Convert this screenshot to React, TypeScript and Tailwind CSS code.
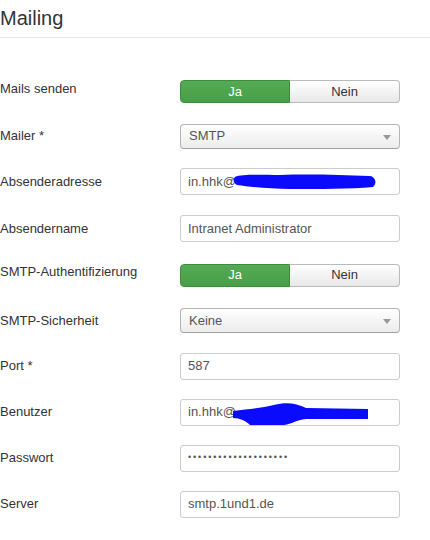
import React from "react";

const YesNo = () => {
  return (
    <div className="flex w-[220px] h-[23px] text-[13px]">
      <button className="w-1/2 rounded-l-[4px] border border-[#3d8b3d] bg-gradient-to-b from-[#55aa55] to-[#479f47] text-white">
        Ja
      </button>
      <button className="w-1/2 rounded-r-[4px] border border-l-0 border-[#bbbbbb] bg-gradient-to-b from-white to-[#e8e8e8] text-[#333]">
        Nein
      </button>
    </div>
  );
};

const Select = ({ value }: { value: string }) => {
  return (
    <div className="relative flex items-center w-[220px] h-[25px] pl-[8px] rounded-[4px] border border-[#b5b5b5] border-b-[#a0a0a0] bg-gradient-to-b from-white to-[#ececec] text-[13px] text-[#555]">
      {value}
      <svg
        className="absolute right-[8px] top-[10px]"
        width="8"
        height="5"
        viewBox="0 0 8 5"
      >
        <path d="M0 0 L8 0 L4 5 Z" fill="#999" />
      </svg>
    </div>
  );
};

const Input = ({
  value,
  children,
}: {
  value: string;
  children?: React.ReactNode;
}) => {
  return (
    <div className="relative flex items-center w-[220px] h-[27px] pl-[7px] rounded-[3px] border border-[#cccccc] bg-white text-[13px] text-[#555]">
      {value}
      {children}
    </div>
  );
};

const Scribble = ({ d }: { d: string }) => {
  return (
    <svg
      className="absolute left-[-1px] top-[-1px]"
      width="220"
      height="27"
      viewBox="0 0 220 27"
    >
      <path d={d} fill="#0a0aff" />
    </svg>
  );
};

const rows = [
  { label: "Mails senden", h: "h-[45px]", lbl: "mb-[6px]", control: <YesNo /> },
  { label: "Mailer *", h: "h-[44px]", lbl: "", control: <Select value="SMTP" /> },
  {
    label: "Absenderadresse",
    h: "h-[47px]",
    lbl: "",
    control: (
      <Input value="in.hhk@">
        <Scribble d="M55,9 C62,6 80,7 100,7 C130,6 160,7 190,8 C196,9 197,16 193,19 C170,21 140,21 110,21 C90,21 70,19 57,17 C53,15 53,11 55,9 Z" />
      </Input>
    ),
  },
  {
    label: "Absendername",
    h: "h-[47px]",
    lbl: "",
    control: <Input value="Intranet Administrator" />,
  },
  { label: "SMTP-Authentifizierung", h: "h-[46px]", lbl: "mb-[6px]", control: <YesNo /> },
  { label: "SMTP-Sicherheit", h: "h-[45px]", lbl: "", control: <Select value="Keine" /> },
  { label: "Port *", h: "h-[46px]", lbl: "", control: <Input value="587" /> },
  {
    label: "Benutzer",
    h: "h-[46px]",
    lbl: "",
    control: (
      <Input value="in.hhk@">
        <Scribble d="M53,12 C70,10 82,9 94,6 C106,3 116,4 126,9 L188,10 L188,20 L126,20 C116,21 112,25 104,26 L70,26 C66,22 60,19 53,19 Z" />
      </Input>
    ),
  },
  {
    label: "Passwort",
    h: "h-[46px]",
    lbl: "",
    control: (
      <Input value="">
        <span className="text-[9px] tracking-[1.9px] text-[#555]">
          {"•".repeat(20)}
        </span>
      </Input>
    ),
  },
  { label: "Server", h: "h-[46px]", lbl: "", control: <Input value="smtp.1und1.de" /> },
];

const App = (): JSX.Element => {
  return (
    <div className="w-[430px] h-[540px] bg-white font-['Liberation_Sans',Arial,sans-serif] text-[#333]">
      <h2 className="pt-[3px] pb-[4px] leading-[30px] text-[20px] font-normal border-b border-[#e5e5e5]">
        Mailing
      </h2>
      <div className="pt-[31px]">
        {rows.map((row) => {
          return (
            <div className={`flex items-center ${row.h}`} key={row.label}>
              <label className={`w-[180px] text-[13px] text-[#333] ${row.lbl}`}>
                {row.label}
              </label>
              {row.control}
            </div>
          );
        })}
      </div>
    </div>
  );
};

export default App;
